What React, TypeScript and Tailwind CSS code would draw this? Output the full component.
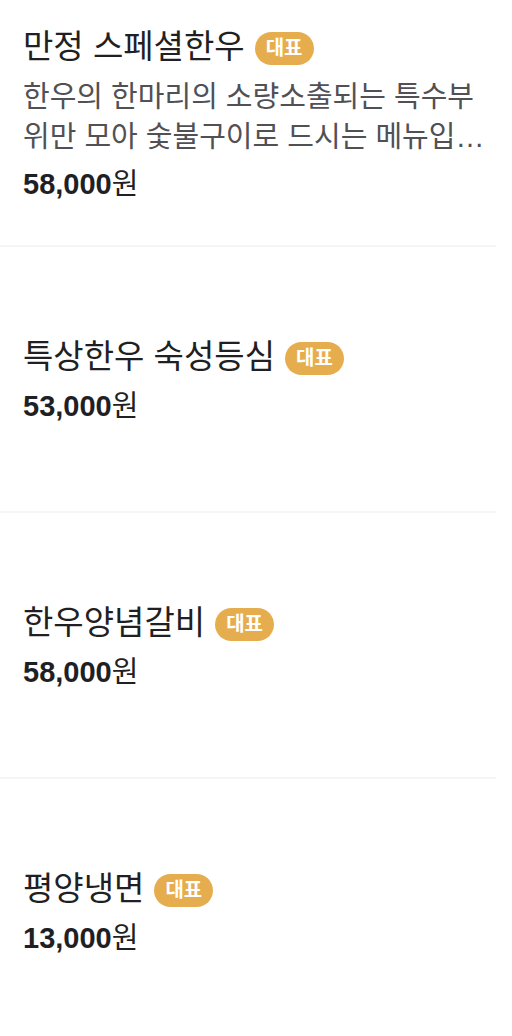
import React from "react";

type Item = { name: string; desc?: string; price: string };

const items: Item[] = [
  {
    name: "만정 스페셜한우",
    desc: "한우의 한마리의 소량소출되는 특수부위만 모아 숯불구이로 드시는 메뉴입니다. 최상급 한우를 엄선하여 제공합니다.",
    price: "58,000",
  },
  { name: "특상한우 숙성등심", price: "53,000" },
  { name: "한우양념갈비", price: "58,000" },
  { name: "평양냉면", price: "13,000" },
];

const font = { fontFamily: '"Liberation Sans", "Noto Sans CJK KR", sans-serif' };

export default function App() {
  return (
    <div className="w-[512px] h-[1036px] overflow-hidden bg-white" style={font}>
      <div className="w-[496px] mt-[-19px]">
        {items.map((it, i) => (
          <div
            key={i}
            className="h-[266px] border-b-2 border-[#f5f5f5] pl-[23px] pr-[7px] flex flex-col justify-center"
          >
            <div className="flex items-center gap-[10px] h-[44px]">
              <span className="text-[33px] leading-[44px] text-[#1f1f24] whitespace-nowrap">{it.name}</span>
              <span className="h-[33px] px-[11px] mt-[3px] rounded-full bg-[#e6ad4f] text-white text-[20px] leading-[33px] font-bold flex items-center">
                대표
              </span>
            </div>
            {it.desc && (
              <p className="mt-[8px] text-[29px] leading-[40px] text-[#505055] line-clamp-2">{it.desc}</p>
            )}
            <div className="mt-[9px] text-[29px] leading-[36px] font-bold text-[#1f1f24]">
              {it.price}
              <span className="font-normal">원</span>
            </div>
          </div>
        ))}
      </div>
    </div>
  );
}
